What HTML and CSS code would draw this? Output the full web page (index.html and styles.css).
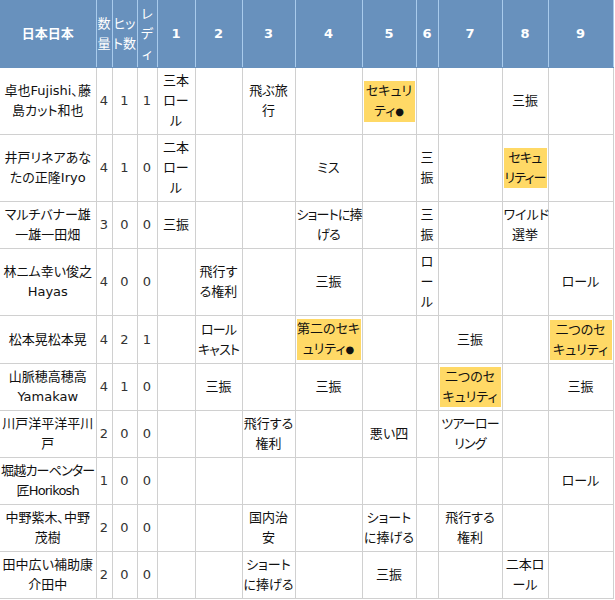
FILE: index.html
```html
<!DOCTYPE html>
<html lang="ja">
<head>
<meta charset="utf-8">
<title>打席結果</title>
<link rel="stylesheet" href="styles.css">
</head>
<body>
<table class="score">
  <colgroup>
    <col class="c-name">
    <col class="c-num1">
    <col class="c-num2">
    <col class="c-num3">
    <col class="c-i1">
    <col class="c-i2">
    <col class="c-i3">
    <col class="c-i4">
    <col class="c-i5">
    <col class="c-i6">
    <col class="c-i7">
    <col class="c-i8">
    <col class="c-i9">
  </colgroup>
  <thead>
    <tr>
      <th>日本日本</th>
      <th class="thin">数<br>量</th>
      <th class="thin">ヒッ<br>ト数</th>
      <th class="thin">レ<br>デ<br>ィ</th>
      <th>1</th><th>2</th><th>3</th><th>4</th><th>5</th><th>6</th><th>7</th><th>8</th><th>9</th>
    </tr>
  </thead>
  <tbody>
    <tr>
      <td>卓也Fujishi、藤<br>島カット和也</td>
      <td class="num">4</td><td class="num">1</td><td class="num">1</td>
      <td>三本<br>ロー<br>ル</td><td></td><td>飛ぶ旅<br>行</td><td></td>
      <td><div class="hl">セキュリ<br>ティ<span class="dot">●</span></div></td>
      <td></td><td></td><td>三振</td><td></td>
    </tr>
    <tr>
      <td>井戸リネアあな<br>たの正隆Iryo</td>
      <td class="num">4</td><td class="num">1</td><td class="num">0</td>
      <td>二本<br>ロー<br>ル</td><td></td><td></td><td>ミス</td><td></td>
      <td>三<br>振</td><td></td>
      <td><div class="hl tight">セキュ<br>リティー</div></td><td></td>
    </tr>
    <tr>
      <td>マルチバナー雄<br>一雄一田畑</td>
      <td class="num">3</td><td class="num">0</td><td class="num">0</td>
      <td>三振</td><td></td><td></td><td class="tight">ショートに捧<br>げる</td><td></td>
      <td>三<br>振</td><td></td><td>ワイルド<br>選挙</td><td></td>
    </tr>
    <tr>
      <td>林ニム幸い俊之<br>Hayas</td>
      <td class="num">4</td><td class="num">0</td><td class="num">0</td>
      <td></td><td>飛行す<br>る権利</td><td></td><td>三振</td><td></td>
      <td>ロ<br>ー<br>ル</td><td></td><td></td><td>ロール</td>
    </tr>
    <tr>
      <td>松本晃松本晃</td>
      <td class="num">4</td><td class="num">2</td><td class="num">1</td>
      <td></td><td class="tight">ロール<br>キャスト</td><td></td>
      <td><div class="hl">第二のセキ<br>ュリティ<span class="dot">●</span></div></td><td></td>
      <td></td><td>三振</td><td></td>
      <td><div class="hl">二つのセ<br>キュリティ</div></td>
    </tr>
    <tr>
      <td>山脈穂高穂高<br>Yamakaw</td>
      <td class="num">4</td><td class="num">1</td><td class="num">0</td>
      <td></td><td>三振</td><td></td><td>三振</td><td></td>
      <td></td><td><div class="hl">二つのセ<br>キュリティ</div></td><td></td><td>三振</td>
    </tr>
    <tr>
      <td>川戸洋平洋平川<br>戸</td>
      <td class="num">2</td><td class="num">0</td><td class="num">0</td>
      <td></td><td></td><td>飛行する<br>権利</td><td></td><td>悪い四</td>
      <td></td><td class="tight">ツアーロー<br>リング</td><td></td><td></td>
    </tr>
    <tr>
      <td class="tight">堀越カーペンター<br>匠Horikosh</td>
      <td class="num">1</td><td class="num">0</td><td class="num">0</td>
      <td></td><td></td><td></td><td></td><td></td>
      <td></td><td></td><td></td><td>ロール</td>
    </tr>
    <tr>
      <td>中野紫木、中野<br>茂樹</td>
      <td class="num">2</td><td class="num">0</td><td class="num">0</td>
      <td></td><td></td><td>国内治<br>安</td><td></td><td>ショート<br>に捧げる</td>
      <td></td><td>飛行する<br>権利</td><td></td><td></td>
    </tr>
    <tr>
      <td>田中広い補助康<br>介田中</td>
      <td class="num">2</td><td class="num">0</td><td class="num">0</td>
      <td></td><td></td><td>ショート<br>に捧げる</td><td></td><td>三振</td>
      <td></td><td></td><td>二本ロ<br>ール</td><td></td>
    </tr>
  </tbody>
</table>
</body>
</html>
```

FILE: styles.css
```css
html, body {
  margin: 0;
  padding: 0;
  background: #ffffff;
}

.score {
  border-collapse: collapse;
  table-layout: fixed;
  width: 613px;
  font-family: "DejaVu Sans", "Noto Sans CJK JP", sans-serif;
  font-size: 13px;
  line-height: 20px;
  font-feature-settings: "palt";
  color: #111111;
}

.c-name { width: 96px; }
.c-num1 { width: 16px; }
.c-num2 { width: 25px; }
.c-num3 { width: 20px; }
.c-i1 { width: 38px; }
.c-i2 { width: 47px; }
.c-i3 { width: 53px; }
.c-i4 { width: 67px; }
.c-i5 { width: 54px; }
.c-i6 { width: 22px; }
.c-i7 { width: 64px; }
.c-i8 { width: 46px; }
.c-i9 { width: 65px; }

.score th {
  background: #6891bd;
  color: #ffffff;
  font-weight: bold;
  text-align: center;
  vertical-align: middle;
  white-space: nowrap;
  padding: 4px 0 3px;
  border-left: 1px solid #a9cbec;
  border-right: 1px solid #a9cbec;
  border-top: 0;
  border-bottom: 1px solid #6891bd;
}

.score th.thin {
  font-weight: normal;
}

.score td {
  text-align: center;
  vertical-align: middle;
  white-space: nowrap;
  padding: 3px 1px;
  border: 1px solid #d0d0d0;
}

.score td.num {
  color: #333333;
}

.score th:first-child,
.score td:first-child {
  border-left: 0;
}

.tight {
  letter-spacing: -0.8px;
}

.hl {
  background: #ffd966;
}

.dot {
  font-size: 10px;
}
```
